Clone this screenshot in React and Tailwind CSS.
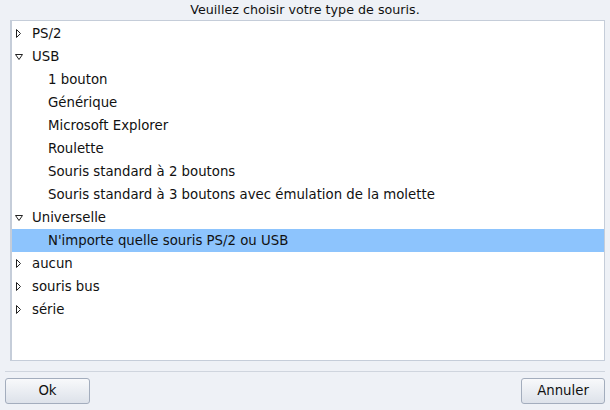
import React from "react";

const rows = [
  { label: "PS/2", level: 0, state: "closed" },
  { label: "USB", level: 0, state: "open" },
  { label: "1 bouton", level: 1 },
  { label: "Générique", level: 1 },
  { label: "Microsoft Explorer", level: 1 },
  { label: "Roulette", level: 1 },
  { label: "Souris standard à 2 boutons", level: 1 },
  { label: "Souris standard à 3 boutons avec émulation de la molette", level: 1 },
  { label: "Universelle", level: 0, state: "open" },
  { label: "N'importe quelle souris PS/2 ou USB", level: 1, selected: true },
  { label: "aucun", level: 0, state: "closed" },
  { label: "souris bus", level: 0, state: "closed" },
  { label: "série", level: 0, state: "closed" },
];

function Arrow({ state }) {
  if (state === "open") {
    return (
      <svg width="9" height="6" viewBox="0 0 9 6" className="shrink-0 ml-[3px]">
        <path d="M0.5 0.5 H7.5 L4 5.5 Z" fill="none" stroke="#222" strokeWidth="1" />
      </svg>
    );
  }
  return (
    <svg width="6" height="9" viewBox="0 0 6 9" className="shrink-0 ml-[4px]">
      <path d="M0.5 0.5 V8.5 L4.5 4.5 Z" fill="none" stroke="#222" strokeWidth="1" />
    </svg>
  );
}

export default function App() {
  return (
    <div
      className="w-[610px] h-[410px] bg-[#eef1f6] text-[13px] text-[#111] flex flex-col overflow-hidden"
      style={{ fontFamily: '"DejaVu Sans", sans-serif' }}
    >
      <div className="h-[20px] flex items-center justify-center leading-none pt-[1px] text-[12.7px]">
        Veuillez choisir votre type de souris.
      </div>

      <div className="ml-[10px] w-[595px] h-[341px] bg-white border border-[#c5cdd9] border-l-2 pt-[1px] text-[13.3px]">
        {rows.map((r, i) => (
          <div
            key={i}
            className={`h-[23px] flex items-center ${r.selected ? "bg-[#8dc4fd]" : ""}`}
          >
            {r.level === 0 ? (
              <>
                <span className="w-[20px] flex items-center">
                  <Arrow state={r.state} />
                </span>
                <span>{r.label}</span>
              </>
            ) : (
              <span className="ml-[36px]">{r.label}</span>
            )}
          </div>
        ))}
      </div>

      <div className="mt-[10px] mx-[5px] h-px bg-[#cfd5de]" />

      <div className="mt-[6px] px-[5px] flex justify-between">
        <button className="w-[85px] h-[26px] rounded-[3px] border border-[#a3adbd] bg-gradient-to-b from-[#f8f9fb] to-[#dde2ea] text-[13.3px]">
          Ok
        </button>
        <button className="w-[84px] h-[26px] rounded-[3px] border border-[#a3adbd] bg-gradient-to-b from-[#f8f9fb] to-[#dde2ea] text-[13.3px]">
          Annuler
        </button>
      </div>
    </div>
  );
}
